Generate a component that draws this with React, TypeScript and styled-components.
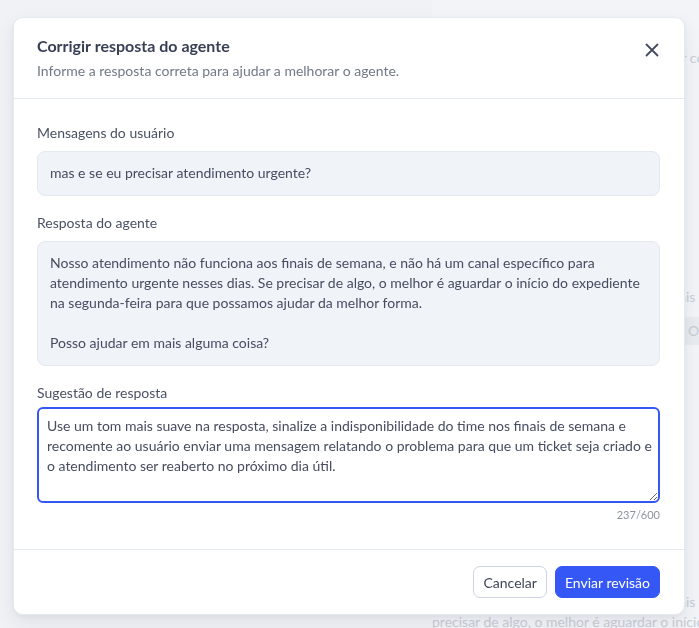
import React, { useState } from 'react'
import styled, { createGlobalStyle } from 'styled-components'

const GlobalStyle = createGlobalStyle`
  html, body {
    margin: 0;
    padding: 0;
    height: 100%;
  }
  body {
    font-family: Lato, "Noto Sans", sans-serif;
    background: #f2f4f8;
    overflow: hidden;
  }
  * {
    box-sizing: border-box;
  }
`

/* Page behind the dialog */
const Page = styled.div`
  height: 628px;
  display: grid;
  grid-template-columns: 432px 1fr;
  background: #f2f4f8;
`

const SidePane = styled.div`
  background: #f0f2f6;
`

const ChatPane = styled.div`
  display: flex;
  flex-direction: column;
  padding-top: 48px;
  overflow: hidden;
  color: #c9cdd5;
  font-size: 14px;
  line-height: 20px;
  white-space: nowrap;
`

const ChatLine = styled.div<{ gap?: number }>`
  margin-top: ${({ gap }) => gap || 0}px;
`

const ChatChip = styled.div<{ gap?: number }>`
  margin-top: ${({ gap }) => gap || 0}px;
  margin-left: 248px;
  padding: 4px 8px;
  width: 60px;
  background: #e8ebf0;
  border-radius: 6px;
  color: #c9cdd5;
`

/* Dialog */
const Overlay = styled.div`
  position: fixed;
  inset: 0;
  padding: 17px 14px 0 13px;
`

const Dialog = styled.div`
  width: 672px;
  background: #ffffff;
  border-radius: 10px;
  border: 1px solid #e6eaf0;
  box-shadow: 0 8px 20px rgba(30, 41, 70, 0.08), 0 2px 6px rgba(30, 41, 70, 0.05);
  display: flex;
  flex-direction: column;
`

const Header = styled.div`
  display: flex;
  justify-content: space-between;
  align-items: flex-start;
  padding: 17px 24px 17px 23px;
  border-bottom: 1px solid #e4e8ef;
`

const Title = styled.h2`
  margin: 0;
  font-size: 16px;
  font-weight: 700;
  line-height: 22px;
  color: #383e54;
`

const Subtitle = styled.p`
  margin: 4px 0 0;
  font-size: 14px;
  line-height: 20px;
  color: #737888;
`

const CloseButton = styled.button`
  border: none;
  background: transparent;
  padding: 0;
  margin-top: 7px;
  width: 16px;
  height: 16px;
  display: flex;
  align-items: center;
  justify-content: center;
  color: #454b60;
  cursor: pointer;
`

const Body = styled.div`
  padding: 24px 24px 27px 23px;
  display: flex;
  flex-direction: column;
`

const Field = styled.div`
  display: flex;
  flex-direction: column;
  & + & {
    margin-top: 17px;
  }
`

const Label = styled.label<{ tight?: boolean }>`
  font-size: 14px;
  line-height: 20px;
  color: #4b5064;
  margin-bottom: ${({ tight }) => (tight ? 4 : 8)}px;
`

const Quote = styled.div`
  background: #f0f3f8;
  border: 1px solid #e4e8ef;
  border-radius: 8px;
  padding: 11px 12px 12px;
  font-size: 14px;
  line-height: 20px;
  color: #474c60;
  white-space: pre-line;
`

const TextArea = styled.textarea`
  height: 96px;
  width: 100%;
  resize: vertical;
  border: 2px solid #3457f6;
  border-radius: 6px;
  padding: 7px 2px 7px 8px;
  font-family: Lato, "Noto Sans", sans-serif;
  font-size: 14px;
  line-height: 20px;
  color: #474c60;
  outline: none;
  display: block;
`

const Counter = styled.div`
  text-align: right;
  font-size: 11px;
  line-height: 14px;
  color: #8d92a0;
  margin-top: 5px;
`

const Footer = styled.div`
  display: flex;
  justify-content: flex-end;
  gap: 8px;
  padding: 16px 24px 16px;
  border-top: 1px solid #e4e8ef;
`

const Button = styled.button<{ primary?: boolean }>`
  height: 32px;
  padding: 0 9px;
  border-radius: 7px;
  font-family: Lato, "Noto Sans", sans-serif;
  font-size: 14px;
  cursor: pointer;
  border: 1px solid ${({ primary }) => (primary ? '#3457f6' : '#ccd3df')};
  background: ${({ primary }) => (primary ? '#3457f6' : '#ffffff')};
  color: ${({ primary }) => (primary ? '#ffffff' : '#3f4458')};
`

const agentAnswer =
  'Nosso atendimento não funciona aos finais de semana, e não há um canal específico para atendimento urgente nesses dias. Se precisar de algo, o melhor é aguardar o início do expediente na segunda-feira para que possamos ajudar da melhor forma.\n\nPosso ajudar em mais alguma coisa?'

const initialSuggestion =
  'Use um tom mais suave na resposta, sinalize a indisponibilidade do time nos finais de semana e recomente ao usuário enviar uma mensagem relatando o problema para que um ticket seja criado e o atendimento ser reaberto no próximo dia útil.'

const CloseIcon = () => (
  <svg width="14" height="14" viewBox="0 0 14 14" fill="none">
    <path d="M1.5 1.5l11 11M12.5 1.5l-11 11" stroke="currentColor" strokeWidth="1.8" strokeLinecap="round" />
  </svg>
)

export default function App() {
  const [suggestion, setSuggestion] = useState(initialSuggestion)

  return (
    <>
      <GlobalStyle />
      <Page>
        <SidePane />
        <ChatPane>
          <ChatLine>Você poderia me dizer como posso ajudar com o seu atendimento urgente?</ChatLine>
          <ChatLine gap={219}>Nosso atendimento não funciona aos finais de semana, e não há um canal</ChatLine>
          <ChatChip gap={10}>Ok</ChatChip>
          <ChatLine gap={247}>Nosso atendimento não funciona aos finais de semanas o</ChatLine>
          <ChatLine>precisar de algo, o melhor é aguardar o início do expediente</ChatLine>
        </ChatPane>
      </Page>

      <Overlay>
        <Dialog role="dialog">
          <Header>
            <div>
              <Title>Corrigir resposta do agente</Title>
              <Subtitle>Informe a resposta correta para ajudar a melhorar o agente.</Subtitle>
            </div>
            <CloseButton aria-label="Fechar">
              <CloseIcon />
            </CloseButton>
          </Header>

          <Body>
            <Field>
              <Label>Mensagens do usuário</Label>
              <Quote>mas e se eu precisar atendimento urgente?</Quote>
            </Field>
            <Field>
              <Label>Resposta do agente</Label>
              <Quote>{agentAnswer}</Quote>
            </Field>
            <Field>
              <Label tight>Sugestão de resposta</Label>
              <TextArea value={suggestion} onChange={e => setSuggestion(e.target.value)} maxLength={600} />
              <Counter>{suggestion.length}/600</Counter>
            </Field>
          </Body>

          <Footer>
            <Button>Cancelar</Button>
            <Button primary>Enviar revisão</Button>
          </Footer>
        </Dialog>
      </Overlay>
    </>
  )
}
